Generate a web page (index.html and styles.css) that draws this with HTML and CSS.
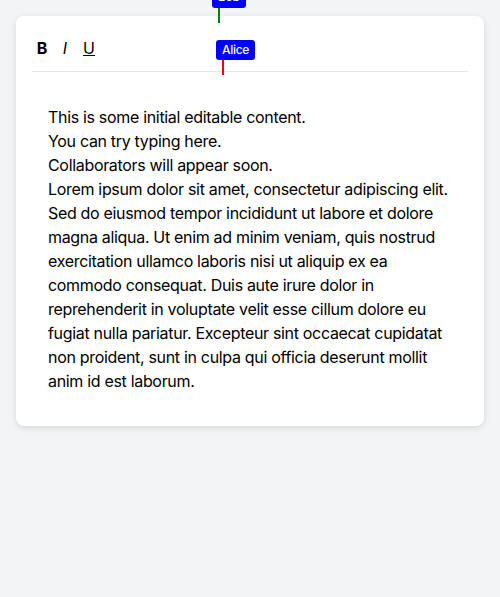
FILE: index.html
```html
<!DOCTYPE html>
<html lang="en">
<head>
<meta charset="utf-8">
<title>Collaborative Editor</title>
<link rel="stylesheet" href="styles.css">
</head>
<body>
<div class="page">
  <div class="card">
    <div class="toolbar">
      <button class="tool tool-bold">B</button>
      <button class="tool tool-italic">I</button>
      <button class="tool tool-underline">U</button>
    </div>
    <div class="editor" contenteditable="true">
      <div class="line">This is some initial editable content.</div>
      <div class="line">You can try typing here.</div>
      <div class="line">Collaborators will appear soon.</div>
      <div class="line">Lorem ipsum dolor sit amet, consectetur adipiscing elit.</div>
      <div class="line">Sed do eiusmod tempor incididunt ut labore et dolore</div>
      <div class="line">magna aliqua. Ut enim ad minim veniam, quis nostrud</div>
      <div class="line">exercitation ullamco laboris nisi ut aliquip ex ea</div>
      <div class="line">commodo consequat. Duis aute irure dolor in</div>
      <div class="line">reprehenderit in voluptate velit esse cillum dolore eu</div>
      <div class="line">fugiat nulla pariatur. Excepteur sint occaecat cupidatat</div>
      <div class="line">non proident, sunt in culpa qui officia deserunt mollit</div>
      <div class="line">anim id est laborum.</div>
    </div>
    <div class="cursor cursor-bob"><span class="cursor-label label-bob">Bob</span></div>
    <div class="cursor cursor-alice"><span class="cursor-label label-alice">Alice</span></div>
  </div>
</div>
</body>
</html>
```

FILE: styles.css
```css
html, body {
  margin: 0;
  padding: 0;
  background: #f3f4f6;
}
body {
  font-family: Inter, "Noto Sans", sans-serif;
  color: #000;
}
.page {
  padding: 16px;
}
.card {
  position: relative;
  background: #fff;
  border-radius: 8px;
  box-shadow: 0 2px 6px rgba(0, 0, 0, 0.12);
  padding: 16px;
}
.toolbar {
  display: flex;
  align-items: center;
  height: 40px;
  box-sizing: border-box;
  padding-bottom: 8px;
  border-bottom: 1px solid #e5e7eb;
}
.tool {
  width: 22px;
  height: 32px;
  padding: 0;
  margin: 0 1px 0 0;
  border: none;
  background: transparent;
  font-family: inherit;
  font-size: 16px;
  color: #000;
  cursor: pointer;
}
.tool-bold { font-weight: 700; margin-left: -1px; }
.tool-italic { font-style: italic; }
.tool-underline { text-decoration: underline; margin-left: 1px; }
.editor {
  margin-top: 17px;
  padding: 16px 16px 17px;
  font-size: 16px;
  line-height: 24px;
  letter-spacing: -0.32px;
  outline: none;
}
.line {
  white-space: nowrap;
}
.cursor {
  position: absolute;
  width: 2px;
  height: 15px;
}
.cursor-bob {
  left: 202px;
  top: -8.5px;
  background: #008000;
}
.cursor-alice {
  left: 206px;
  top: 44px;
  background: #ff0000;
}
.cursor-label {
  position: absolute;
  bottom: 100%;
  left: -6px;
  padding: 2px 6px;
  font-size: 12px;
  line-height: 16.5px;
  font-weight: 500;
  letter-spacing: -0.3px;
  color: #fff;
  background: #0000ff;
  border-radius: 3px;
  white-space: nowrap;
}
```
